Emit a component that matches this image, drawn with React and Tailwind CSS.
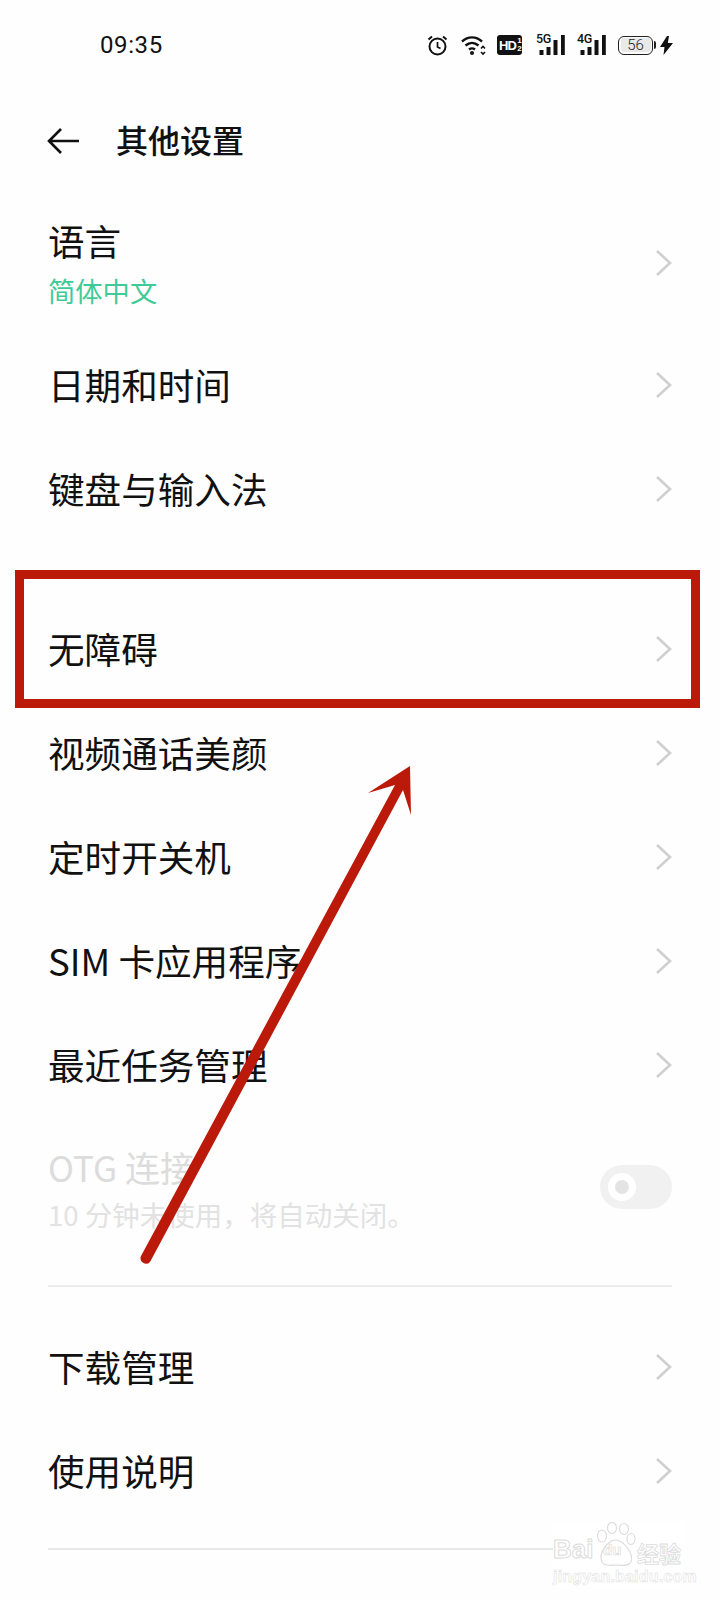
const cjk = "font-['Noto_Sans_CJK_SC','Noto_Sans',sans-serif]";

function Chevron() {
  return (
    <svg width="18" height="28" viewBox="0 0 18 28" className="shrink-0" fill="none">
      <path d="M2 2 L15 14 L2 26" stroke="#cfcfcf" strokeWidth="2.6" />
    </svg>
  );
}

function Row({ label }) {
  return (
    <div className="flex h-[104px] items-center justify-between pl-[48px] pr-[47px]">
      <span className={`text-[36.6px] leading-none text-[#111] ${cjk}`}>{label}</span>
      <Chevron />
    </div>
  );
}

function Alarm() {
  return (
    <svg width="21" height="21" viewBox="0 0 21 21" fill="none" stroke="#111" strokeWidth="2" className="block">
      <circle cx="10.5" cy="11.5" r="8" />
      <path d="M10.5 7v5l3 1.5" strokeWidth="1.7" />
      <path d="M1.5 4.5 5 1.5M19.5 4.5 16 1.5" />
    </svg>
  );
}

function Wifi() {
  return (
    <svg width="26" height="21" viewBox="0 0 26 21" fill="none" stroke="#111" strokeWidth="2.4" className="block">
      <path d="M1 6.5C7 1 15 1 21 6.5" />
      <path d="M4.5 10.5C8.5 7 13.5 7 17.5 10.5" />
      <path d="M8 14.5C10 13 12 13 14 14.5" />
      <circle cx="11" cy="18" r="2" fill="#111" stroke="none" />
      <path d="M20 13.5 22 11.5 24 13.5M20 17 22 19 24 17" strokeWidth="1.6" />
    </svg>
  );
}

function Hd() {
  return (
    <span className="flex h-[20px] w-[25px] items-center overflow-hidden rounded-[3px] bg-[#111] pl-[2px] font-['Liberation_Sans',sans-serif] text-[13px] font-bold leading-none tracking-[-0.8px] text-white">
      HD
      <span className="ml-[1px] flex flex-col text-[8px] leading-[8px] tracking-normal">
        <span>1</span>
        <span>2</span>
      </span>
    </span>
  );
}

function Signal({ label }) {
  return (
    <span className="relative block h-[20px] w-[29px]">
      <span className="absolute left-0 top-[-2px] font-['Roboto',sans-serif] text-[12.5px] font-medium leading-none tracking-[-0.3px] text-[#111]">
        {label}
      </span>
      <svg width="29" height="20" viewBox="0 0 29 20" fill="#111" className="absolute left-0 top-0">
        <rect x="3.5" y="15" width="4" height="5" />
        <rect x="10.5" y="12" width="4" height="8" />
        <rect x="17.5" y="5" width="4" height="15" />
        <rect x="25" y="0" width="3.8" height="20" />
      </svg>
    </span>
  );
}

function Battery() {
  return (
    <span className="flex items-center">
      <span className="flex h-[19px] w-[35px] rounded-[6px] border-[1.5px] border-[#222] p-[1.5px]">
        <span className="flex flex-1 items-center justify-center rounded-[3px] bg-[#e9e9e9] font-['Roboto',sans-serif] text-[15px] font-light leading-none text-[#222]">
          56
        </span>
      </span>
      <span className="ml-[1px] h-[8px] w-[2px] rounded-r-sm bg-[#222]" />
    </span>
  );
}

function Bolt() {
  return (
    <svg width="13" height="19" viewBox="0 0 13 19" fill="#111" className="block">
      <path d="M7 0 0 11h4.5L3.5 19 13 7H7.8L9 0z" />
    </svg>
  );
}

function Arrow() {
  return (
    <svg
      className="pointer-events-none absolute left-[130px] top-[755px]"
      width="300"
      height="520"
      viewBox="130 755 300 520"
    >
      <path
        d="M410 766 L368 793 L395 785 L141 1256 A5.5 5.5 0 0 0 150 1262 L403 790 L411 815 Z"
        fill="#bb1a0b"
      />
    </svg>
  );
}

function Watermark() {
  return (
    <div className="absolute left-[553px] top-[1522px] h-[64px] w-[130px] bg-white">
      <span className="absolute left-0 top-[14px] font-['Liberation_Sans',sans-serif] text-[26px] font-bold leading-none text-white [-webkit-text-stroke:1px_#dcdcdc]">
        Bai
      </span>
      <svg className="absolute left-[41px] top-0" width="42" height="46" viewBox="0 0 42 46" fill="none" stroke="#dcdcdc" strokeWidth="1.2">
        <ellipse cx="8" cy="14" rx="4.5" ry="6" />
        <ellipse cx="18" cy="6" rx="4.5" ry="5.5" />
        <ellipse cx="30" cy="7" rx="4.5" ry="5.5" />
        <ellipse cx="37" cy="17" rx="4" ry="5.5" />
        <path d="M21 18C13 19 4 32 8 40c3 5 10 3 14 3 5 0 12 2 15-3 3-8-7-22-16-22z" />
      </svg>
      <span className="absolute left-[50px] top-[20px] font-['Liberation_Sans',sans-serif] text-[15px] font-bold leading-none text-white [-webkit-text-stroke:0.7px_#dcdcdc]">
        du
      </span>
      <span className={`absolute left-[84px] top-[19px] text-[22px] font-bold leading-none text-white [-webkit-text-stroke:0.8px_#dcdcdc] ${cjk}`}>
        经验
      </span>
      <span className="absolute left-0 top-[47px] font-['Liberation_Sans',sans-serif] text-[16px] font-bold leading-none tracking-[0.2px] text-white [-webkit-text-stroke:0.5px_#dcdcdc]">
        jingyan.baidu.com
      </span>
    </div>
  );
}

export default function App() {
  return (
    <div className={`relative h-[1600px] w-[720px] overflow-hidden bg-[#fefefe] ${cjk}`}>
      <div className="flex h-[90px] items-center justify-between pl-[100px] pr-[47px]">
        <span className="font-['Roboto',sans-serif] text-[24px] leading-none tracking-[0.6px] text-[#111]">09:35</span>
        <div className="flex items-center">
          <span className="mr-[13px]"><Alarm /></span>
          <span className="mr-[10px]"><Wifi /></span>
          <span className="mr-[14px]"><Hd /></span>
          <span className="mr-[12px]"><Signal label="5G" /></span>
          <span className="mr-[12px]"><Signal label="4G" /></span>
          <span className="mr-[4px]"><Battery /></span>
          <Bolt />
        </div>
      </div>

      <div className="flex h-[102px] items-center pl-[47px]">
        <svg width="33" height="26" viewBox="0 0 33 26" fill="none" stroke="#111" strokeWidth="2.6">
          <path d="M32 13H2M14 1 2 13l12 12" />
        </svg>
        <span className="mb-[4px] ml-[36px] text-[32px] font-medium leading-none text-[#111]">其他设置</span>
      </div>

      <div className="flex h-[141px] items-center justify-between pl-[48px] pr-[47px]">
        <div className="mt-[5px] flex flex-col">
          <span className="text-[36.6px] leading-[48px] text-[#111]">语言</span>
          <span className="mt-[2px] text-[27.3px] leading-[46px] text-[#3fcb98]">简体中文</span>
        </div>
        <Chevron />
      </div>

      <Row label="日期和时间" />
      <Row label="键盘与输入法" />
      <div className="h-[56px]" />
      <Row label="无障碍" />
      <Row label="视频通话美颜" />
      <Row label="定时开关机" />
      <Row label="SIM 卡应用程序" />
      <Row label="最近任务管理" />

      <div className="flex h-[136px] items-center justify-between pl-[48px] pr-[48px]">
        <div className="mt-[8px] flex flex-col">
          <span className="text-[35px] leading-[50px] text-[#dcdcdc]">OTG 连接</span>
          <span className="text-[27.5px] leading-[44px] text-[#e2e2e2]">10 分钟未使用，将自动关闭。</span>
        </div>
        <span className="mt-[4px] flex h-[44px] w-[72px] items-center rounded-full bg-[#f1f1f1] pl-[8px]">
          <span className="h-[28px] w-[28px] rounded-full border-[7px] border-white bg-[#e4e4e4]" />
        </span>
      </div>

      <div className="mx-[48px] mt-[32px] h-[2px] bg-[#ececec]" />
      <div className="h-[28px]" />
      <Row label="下载管理" />
      <Row label="使用说明" />
      <div className="ml-[48px] mt-[25px] h-[2px] w-[505px] bg-[#e8e8e8]" />

      <div className="pointer-events-none absolute left-[15px] top-[570px] h-[138px] w-[685px] border-[9px] border-[#bb1a0b]" />
      <Arrow />
      <Watermark />
    </div>
  );
}
